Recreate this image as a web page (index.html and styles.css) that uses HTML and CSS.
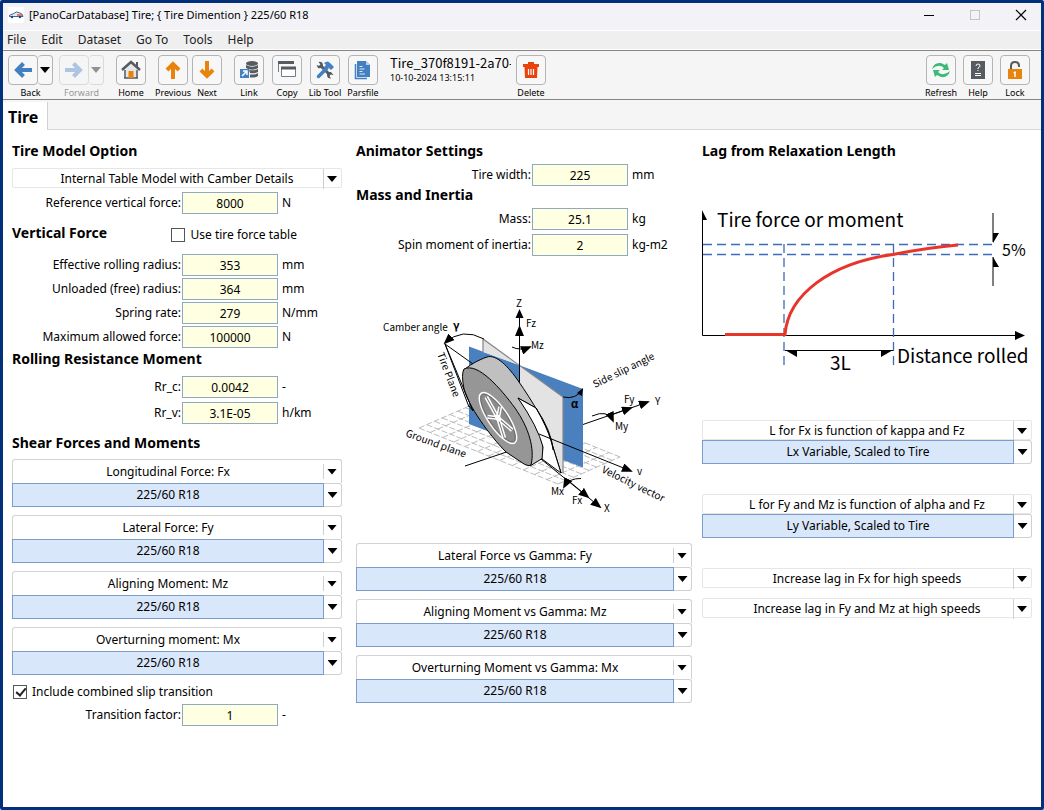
FILE: index.html
```html
<!DOCTYPE html>
<html lang="en">
<head>
<meta charset="utf-8">
<title>[PanoCarDatabase] Tire</title>
<link rel="stylesheet" href="styles.css">
</head>
<body>
<div class="window">
  <header class="titlebar">
    <svg class="app-icon" viewBox="0 0 16 16" aria-hidden="true"><rect width="16" height="16" fill="#fff"/><path d="M1 9Q3 7 5 7Q8 3.500 12 6Q15 7 15 9.500H2Z" fill="#e3ebf6" stroke="#285694" stroke-width=".9"/><path d="M9 8H14" stroke="#e25a43" stroke-width="1.500"/><circle cx="4" cy="10" r="1.200" fill="#346"/><circle cx="12" cy="10" r="1.200" fill="#346"/></svg>
    <span class="title">[PanoCarDatabase] Tire; { Tire Dimention } 225/60 R18</span>
    <div class="window-buttons">
      <button type="button" aria-label="Minimize"><svg viewBox="0 0 12 12"><path d="M1 6.500H11" stroke="#000"/></svg></button>
      <button type="button" aria-label="Maximize" disabled><svg viewBox="0 0 12 12"><rect x="1.500" y="1.500" width="9" height="9" fill="none" stroke="#c4c4c6"/></svg></button>
      <button type="button" aria-label="Close"><svg viewBox="0 0 12 12"><path d="M1 1L11 11M11 1L1 11" stroke="#000" stroke-width="1.200"/></svg></button>
    </div>
  </header>
  <nav class="menubar">
    <button type="button">File</button><button type="button">Edit</button><button type="button">Dataset</button><button type="button">Go To</button><button type="button">Tools</button><button type="button">Help</button>
  </nav>
  <div class="toolbar">
    <div class="tools near">
      <div class="split">
        <div class="split-row">
          <button type="button" class="box" aria-labelledby="back"><svg viewBox="0 0 20 20"><path d="M19 10H4M10.500 3.500L4 10L10.500 16.500" fill="none" stroke="#4380c2" stroke-width="4"/></svg></button><button type="button" class="box drop" aria-label="Back history"><i class="arrow"></i></button>
        </div>
        <span id="back" class="caption">Back</span>
      </div>
      <div class="split off">
        <div class="split-row">
          <button type="button" class="box" aria-labelledby="forward" disabled><svg viewBox="0 0 20 20"><path d="M1 10H16M9.500 3.500L16 10L9.500 16.500" fill="none" stroke="#4380c2" stroke-width="4"/></svg></button><button type="button" class="box drop" aria-label="Forward history" disabled><i class="arrow"></i></button>
        </div>
        <span id="forward" class="caption">Forward</span>
      </div>
    </div>
    <button type="button" class="tool"><span class="box"><svg viewBox="0 0 20 20"><path d="M4 10L10 4L16 10V18H4Z" fill="#e6e6e6"/><path d="M4 10V18M16 10V18M3 18H17" stroke="#555b60" stroke-width="1.500"/><path d="M1 10L10 2L19 10" fill="none" stroke="#555b60" stroke-width="2.500"/><path d="M15 2H17V8L15 6Z" fill="#555b60"/><path d="M7.500 11H12.500V18H7.500Z" fill="#e8830c"/></svg></span><span class="caption">Home</span></button>
    <div class="tools tight">
      <button type="button" class="tool"><span class="box"><svg viewBox="0 0 20 20"><path d="M10 19V4M4 10L10 4L16 10" fill="none" stroke="#e8830c" stroke-width="4"/></svg></span><span class="caption">Previous</span></button>
      <button type="button" class="tool"><span class="box"><svg viewBox="0 0 20 20"><path d="M10 1V16M4 10L10 16L16 10" fill="none" stroke="#e8830c" stroke-width="4"/></svg></span><span class="caption">Next</span></button>
    </div>
    <div class="tools">
      <button type="button" class="tool"><span class="box"><svg viewBox="0 0 20 20"><g fill="#555b60"><ellipse cx="13" cy="3.500" rx="6" ry="2.500"/><path d="M7 5Q13 8.500 19 5V8Q13 11.500 7 8ZM10 10Q15 11 19 9V12Q15 14 11 13ZM11 14.500Q16 15 19 13V16Q16 18 11 17.500Z"/></g><path d="M1 9H10V18H1Z" fill="#4380c2"/><path d="M3 16L8 11M4 11H8V15" fill="none" stroke="#fff" stroke-width="1.500"/></svg></span><span class="caption">Link</span></button>
      <button type="button" class="tool"><span class="box"><svg viewBox="0 0 20 20"><path d="M1.500 12V2H17" fill="none" stroke="#777c80"/><path d="M1 2.500H17" stroke="#555b60" stroke-width="3"/><path d="M4.500 7.500H18.500V16.500H4.500Z" fill="#fff" stroke="#777c80"/><path d="M4 8H19" stroke="#555b60" stroke-width="3"/></svg></span><span class="caption">Copy</span></button>
      <button type="button" class="tool"><span class="box"><svg viewBox="0 0 20 20"><path d="M5 5L15 15" stroke="#555b60" stroke-width="3"/><path d="M3.500 2Q8 1 8 6Q7 9 3 8L1.500 5L4.500 6L5.500 4.500ZM12 15Q12 11.500 16 12L18.500 15L15.500 14.500L14.500 16L16 18.500Q12 18.500 12 15Z" fill="#555b60"/><path d="M3.500 16.500L12 8" stroke="#4380c2" stroke-width="3.500" stroke-linecap="round"/><path d="M9 3Q13 0 15 3L19 7L16 10L13 7L11 9L9 7L11 5Z" fill="#4380c2"/></svg></span><span class="caption">Lib Tool</span></button>
      <button type="button" class="tool"><span class="box"><svg viewBox="0 0 20 20"><path d="M2.500 4V18.500H14" fill="none" stroke="#4380c2" stroke-width="1.500"/><path d="M4 1H13L17 5V17H4Z" fill="#4380c2"/><path d="M13 1V5H17" fill="#b9d0ec"/><path d="M6.500 6.500H9.500M6.500 9H11.500M6.500 11.500H9.500M6.500 14H12" stroke="#dce8f6"/></svg></span><span class="caption">Parsfile</span></button>
    </div>
    <div class="record"><span class="record-id">Tire_370f8191-2a70-4</span><span class="record-date">10-10-2024 13:15:11</span></div>
    <button type="button" class="tool delete"><span class="box"><svg viewBox="0 0 20 20"><path d="M7 4V2H13V4H18V7H16.500L16 18H4L3.500 7H2V4Z" fill="#e8430c"/><path d="M7.500 9V15M10 9V15M12.500 9V15" stroke="#fff" stroke-width="1.200"/></svg></span><span class="caption">Delete</span></button>
    <div class="tools end">
      <button type="button" class="tool"><span class="box"><svg viewBox="0 0 20 20"><path d="M1 9Q3 2 10 3L14 5L16 3L18 10H11L13 8Q8 3 1 9ZM19 11Q17 18 10 17L6 15L4 17L2 10H9L7 12Q12 17 19 11Z" fill="#3dba78"/></svg></span><span class="caption">Refresh</span></button>
      <button type="button" class="tool"><span class="box"><svg viewBox="0 0 20 20"><path d="M3 1H17V19H3Z" fill="#555b60"/><path d="M8 6Q8 4 10 4T12 6Q12 7 10 8V9M10 10V11" fill="none" stroke="#fff"/><path d="M7 13.500H13M7 15.500H13" stroke="#fff"/></svg></span><span class="caption">Help</span></button>
      <button type="button" class="tool"><span class="box"><svg viewBox="0 0 20 20"><path d="M6 9V6Q6 2 10 2T14 6V7" fill="none" stroke="#555b60" stroke-width="2"/><path d="M3 9H17V19H3Z" fill="#e8830c"/><path d="M10 11.500V17M8.500 12.500H11" stroke="#fff" stroke-width="1.500"/></svg></span><span class="caption">Lock</span></button>
    </div>
  </div>
  <div class="tabs"><h1 class="tab">Tire</h1></div>

  <main class="columns">
    <section class="column first">
      <h2>Tire Model Option</h2>
      <div class="combo plain low"><select aria-label="Tire model"><option>Internal Table Model with Camber Details</option></select><i class="arrow"></i></div>
      <div class="fields under-combo">
        <div class="field"><label for="fref">Reference vertical force:</label><input id="fref" value="8000"><span>N</span></div>
      </div>
      <div class="heading-row">
        <h2>Vertical Force</h2>
        <label class="check"><input type="checkbox">Use tire force table</label>
      </div>
      <div class="fields">
        <div class="field"><label for="err">Effective rolling radius:</label><input id="err" value="353"><span>mm</span></div>
        <div class="field"><label for="ufr">Unloaded (free) radius:</label><input id="ufr" value="364"><span>mm</span></div>
        <div class="field"><label for="spr">Spring rate:</label><input id="spr" value="279"><span>N/mm</span></div>
        <div class="field"><label for="maf">Maximum allowed force:</label><input id="maf" value="100000"><span>N</span></div>
      </div>
      <h2 class="close-heading">Rolling Resistance Moment</h2>
      <div class="fields loose resist">
        <div class="field"><label for="rrc">Rr_c:</label><input id="rrc" value="0.0042"><span>-</span></div>
        <div class="field"><label for="rrv">Rr_v:</label><input id="rrv" value="3.1E-05"><span>h/km</span></div>
      </div>
      <h2 class="far-heading">Shear Forces and Moments</h2>
      <div class="links">
        <div class="pair">
          <div class="combo"><select aria-label="Longitudinal force"><option>Longitudinal Force: Fx</option></select><i class="arrow"></i></div>
          <div class="link"><button type="button" class="target">225/60 R18</button><button type="button" class="pick" aria-label="Choose dataset"><i class="arrow"></i></button></div>
        </div>
        <div class="pair">
          <div class="combo"><select aria-label="Lateral force"><option>Lateral Force: Fy</option></select><i class="arrow"></i></div>
          <div class="link"><button type="button" class="target">225/60 R18</button><button type="button" class="pick" aria-label="Choose dataset"><i class="arrow"></i></button></div>
        </div>
        <div class="pair">
          <div class="combo"><select aria-label="Aligning moment"><option>Aligning Moment: Mz</option></select><i class="arrow"></i></div>
          <div class="link"><button type="button" class="target">225/60 R18</button><button type="button" class="pick" aria-label="Choose dataset"><i class="arrow"></i></button></div>
        </div>
        <div class="pair">
          <div class="combo"><select aria-label="Overturning moment"><option>Overturning moment: Mx</option></select><i class="arrow"></i></div>
          <div class="link"><button type="button" class="target">225/60 R18</button><button type="button" class="pick" aria-label="Choose dataset"><i class="arrow"></i></button></div>
        </div>
      </div>
      <label class="check slip"><input type="checkbox" checked>Include combined slip transition</label>
      <div class="fields">
        <div class="field"><label for="trf">Transition factor:</label><input id="trf" value="1"><span>-</span></div>
      </div>
    </section>

    <section class="column second">
      <h2>Animator Settings</h2>
      <div class="fields under-combo">
        <div class="field"><label for="twd">Tire width:</label><input id="twd" value="225"><span>mm</span></div>
      </div>
      <h2>Mass and Inertia</h2>
      <div class="fields loose under-combo">
        <div class="field"><label for="mas">Mass:</label><input id="mas" value="25.1"><span>kg</span></div>
        <div class="field"><label for="smi">Spin moment of inertia:</label><input id="smi" value="2"><span>kg-m2</span></div>
      </div>
      <svg class="tire-figure" viewBox="356 290 336 230" role="img" aria-label="Tire axis system">
        <defs><marker id="tip" viewBox="0 0 11 9" refX="9" refY="4.500" markerWidth="11" markerHeight="9" markerUnits="userSpaceOnUse" orient="auto"><path d="M0 0L11 4.500L0 9Z"/></marker></defs>
        <g transform="matrix(1.390 .560 .620 -.270 419 428)"><path class="ground" d="M0 0H100M0 12.500H100M0 25H100M0 37.500H100M0 50H100M0 62.500H100M0 75H100M0 87.500H100M0 100H100M0 0V100M8 0V100M17 0V100M25 0V100M33 0V100M42 0V100M50 0V100M58 0V100M67 0V100M75 0V100M83 0V100M92 0V100M100 0V100"/></g>
        <path class="line" d="M465 466L508 451.500"/>
        <path d="M469 346.500L583 389V467.500L469 424Z" fill="#4a80bd"/>
        <path d="M519 365L563 397V473L519 441ZM483 339L519 365L483 352Z" fill="#e3e3e3"/>
        <path d="M483 352V339L563 397V473" fill="none" stroke="#858585" stroke-width="1.200"/>
        <path class="line" d="M519.500 384V313"/>
        <path d="M464 370C468 366 478 360 487 357C496 354 508 366 519 382C530 398 549 427 553 447L561 473L536 408L518 398C529 411 542 433 543 447V458L530 466Z" fill="#c0c0c0" class="line"/>
        <path d="M518 398L536 408Q547 427 551 441L561 473L542 459L543 447Q538 427 518 398Z" fill="#fff" class="line"/>
        <path class="line" d="M536 408Q552 432 553 450"/>
        <path d="M464 369C478 362 501 389 515 408C529 428 535 449 531 465Q528 467 521 462L506 452C489 435 468 405 464 389Q461 374 464 369Z" fill="#969696" class="line"/>
        <g transform="translate(498 418) rotate(56)">
          <ellipse rx="30" ry="10" fill="#8b8b8b" stroke="#fff" stroke-width="1.400"/>
          <ellipse rx="28" ry="8.500" fill="none" stroke="#666" stroke-width=".7"/>
          <g stroke="#fff" stroke-width="4"><path d="M0 0L-24 -2M0 0L-7 8M0 0L20 6M0 0L18 -5M0 0L-8 -8"/></g>
          <g stroke="#777" stroke-width="1"><path d="M0 0L-24 -2M0 0L-7 8M0 0L20 6M0 0L18 -5M0 0L-8 -8"/></g>
          <ellipse rx="4" ry="2.500" fill="#fff"/>
        </g>
        <path class="line" d="M473 364L445 344L473 411L469 406M445 344L469 407"/>
        <path class="line" d="M484 339Q462 327 445 343" marker-end="url(#tip)"/>
        <path d="M519.500 309L515.500 318H523.500ZM519.500 325L515 336H524Z"/>
        <path class="line" d="M512 347Q520 351 530 347" marker-end="url(#tip)"/>
        <path class="line" d="M563 397Q576 400 583 389"/><path d="M583 388L577 393L582 396Z"/>
        <path class="line" d="M583 424.500L648 402" marker-end="url(#tip)"/><path class="line" d="M611 415L631 408" marker-end="url(#tip)"/>
        <path class="line" d="M592 416Q608 409 613 421" marker-end="url(#tip)"/>
        <path class="line" d="M539 434L631 471" marker-end="url(#tip)"/>
        <path class="line" d="M541 459L600 507" marker-end="url(#tip)"/><path class="line" d="M570 482L588 497" marker-end="url(#tip)"/>
        <path class="line" d="M581 478.500Q569 478 564 487" marker-end="url(#tip)"/>
        <text x="383" y="331">Camber angle</text><text x="453" y="330" class="greek">γ</text>
        <text x="516" y="307">Z</text><text x="526" y="327">Fz</text><text x="531" y="349">Mz</text>
        <text x="571" y="408" class="greek">α</text><text x="624" y="403">Fy</text><text x="655" y="405">Y</text><text x="615" y="430">My</text>
        <text x="637" y="475">v</text><text x="551" y="495">Mx</text><text x="572" y="504">Fx</text><text x="604" y="512">X</text>
        <text transform="translate(595 388) rotate(-26)">Side slip angle</text>
        <text transform="translate(437 354) rotate(69)">Tire Plane</text>
        <text transform="translate(405 436) rotate(20)">Ground plane</text>
        <text transform="translate(601 472) rotate(26)">Velocity vector</text>
      </svg>
      <div class="links">
        <div class="pair">
          <div class="combo"><select aria-label="Lateral force vs gamma"><option>Lateral Force vs Gamma: Fy</option></select><i class="arrow"></i></div>
          <div class="link"><button type="button" class="target">225/60 R18</button><button type="button" class="pick" aria-label="Choose dataset"><i class="arrow"></i></button></div>
        </div>
        <div class="pair">
          <div class="combo"><select aria-label="Aligning moment vs gamma"><option>Aligning Moment vs Gamma: Mz</option></select><i class="arrow"></i></div>
          <div class="link"><button type="button" class="target">225/60 R18</button><button type="button" class="pick" aria-label="Choose dataset"><i class="arrow"></i></button></div>
        </div>
        <div class="pair">
          <div class="combo"><select aria-label="Overturning moment vs gamma"><option>Overturning Moment vs Gamma: Mx</option></select><i class="arrow"></i></div>
          <div class="link"><button type="button" class="target">225/60 R18</button><button type="button" class="pick" aria-label="Choose dataset"><i class="arrow"></i></button></div>
        </div>
      </div>
    </section>

    <section class="column third">
      <h2>Lag from Relaxation Length</h2>
      <svg class="lag-figure" viewBox="702 200 330 180" role="img" aria-label="Tire force or moment against distance rolled">
        <path class="line" d="M702.500 212V335.500H1018"/>
        <path d="M702 210L707 220H702ZM1025 335.500L1015 331V340Z"/>
        <g fill="none" stroke="#3c6cb8" stroke-width="1.300" stroke-dasharray="9 5"><path d="M703 244.500H997M703 254.500H997M784 244V370M893.500 244V370"/></g>
        <path d="M725 334.500H785C788 295 830 263 893 254.500Q925 248 958 245" fill="none" stroke="#e8352b" stroke-width="3"/>
        <path class="line" d="M993 213V242M993 286V257"/><path d="M993 243L999 233H993ZM993 257L999 267H993Z"/>
        <path class="line" d="M785 350.500H893"/><path d="M785 350L797 357V350ZM893 350L881 357V350Z"/>
        <g class="lag-text"><text x="717" y="227">Tire force or moment</text><text x="897" y="363">Distance rolled</text><text x="830" y="370">3L</text></g>
        <text class="percent" x="1002" y="256">5%</text>
      </svg>
      <div class="lags">
        <div class="pair">
          <div class="combo plain"><select aria-label="L for Fx"><option>L for Fx is function of kappa and Fz</option></select><i class="arrow"></i></div>
          <div class="link"><button type="button" class="target">Lx Variable, Scaled to Tire</button><button type="button" class="pick" aria-label="Choose dataset"><i class="arrow"></i></button></div>
        </div>
        <div class="pair">
          <div class="combo plain"><select aria-label="L for Fy and Mz"><option>L for Fy and Mz is function of alpha and Fz</option></select><i class="arrow"></i></div>
          <div class="link"><button type="button" class="target">Ly Variable, Scaled to Tire</button><button type="button" class="pick" aria-label="Choose dataset"><i class="arrow"></i></button></div>
        </div>
        <div class="speeds">
          <div class="combo plain"><select aria-label="Fx lag at high speeds"><option>Increase lag in Fx for high speeds</option></select><i class="arrow"></i></div>
          <div class="combo plain"><select aria-label="Fy and Mz lag at high speeds"><option>Increase lag in Fy and Mz at high speeds</option></select><i class="arrow"></i></div>
        </div>
      </div>
    </section>
  </main>
</div>
</body>
</html>
```
FILE: styles.css
```css
* { box-sizing: border-box; }
body { margin: 0; background: #fff; color: #000; font: 12px/20px "Noto Sans", "Open Sans", sans-serif; }
button, input, select { font: inherit; color: inherit; margin: 0; padding: 0; }
button { background: none; border: 0; }
svg { display: block; }
h1, h2 { margin: 0; font-weight: 700; }

.window { min-height: 100vh; border: 3px solid #03307b; border-radius: 2px; background: #fff; }
.titlebar { display: flex; align-items: center; height: 28px; padding: 0 14px 4px 5px; background: #f3f3f7; border-bottom: 1px solid #fff; font-size: 11px; }
.app-icon { width: 16px; height: 16px; margin-right: 5px; }
.window-buttons { display: flex; gap: 34px; margin-left: auto; }
.window-buttons svg { width: 12px; height: 12px; }
.menubar { display: flex; gap: 15px; height: 19px; padding-left: 4px; background: #efefef; border-bottom: 1px solid #fff; line-height: 18px; }
.menubar button { color: #222; }

.toolbar { display: flex; align-items: flex-start; gap: 12px; height: 50px; padding: 4px 11px 0 5px; background: #f5f5f5; border: solid #858585; border-width: 1px 0; }
.tools { display: flex; gap: 8px; }
.tools.tight { gap: 4px; }
.tools.near { gap: 6px; }
.tools.end { gap: 7px; margin-left: auto; }
.tool, .split { display: flex; flex-direction: column; align-items: center; flex: none; }
.tool { width: 30px; }
.split-row { display: flex; }
.box { display: flex; align-items: center; justify-content: center; width: 30px; height: 30px; border: 1px solid #b4b4b4; border-radius: 4px; background: #f7f7f7; }
.box svg { width: 20px; height: 20px; }
.box.drop { width: 15px; border-left: 0; }
.off { opacity: .4; }
.caption { font-size: 9px; line-height: 15px; white-space: nowrap; }
.record { display: flex; flex-direction: column; width: 121px; overflow: hidden; white-space: nowrap; line-height: 15px; }
.record-id { font-family: "Noto Sans CJK SC", "Noto Sans", sans-serif; font-size: 13px; }
.record-date { font-size: 9px; }
.delete { margin-left: -7px; }

.arrow { width: 10px; height: 6px; background: #000; clip-path: polygon(0 0, 100% 0, 50% 100%); }

.tabs { display: flex; height: 30px; padding-top: 2px; background: #f5f5f5; border-bottom: 1px solid #d6d6d6; }
.tab { height: 28px; padding: 0 9px 0 5px; background: #fff; border-right: 1px solid #d0d0d0; font-size: 16px; line-height: 30px; }

.columns { display: grid; grid-template-columns: 334fr 336fr 330fr; column-gap: 10px; padding: 12px 9px; }
.column { min-width: 0; }
.first { padding-right: 4px; }
h2 { font-size: 14px; line-height: 18px; white-space: nowrap; }
.close-heading { margin-top: 2px; }
.far-heading { margin-top: 10px; margin-bottom: 7px; }
.heading-row { display: flex; justify-content: space-between; padding: 10px 45px 10px 0; }
.heading-row .check { margin-top: 2px; }

.fields { display: grid; gap: 2px; }
.fields.loose { gap: 4px; }
.under-combo { margin-top: 4px; }
.resist { margin-top: 8px; }
.field { display: grid; grid-template-columns: 169px 96px 1fr; align-items: center; column-gap: 1px; white-space: nowrap; }
.second .field { grid-template-columns: 175px 96px 1fr; }
.field label { text-align: right; }
.field input { width: 100%; height: 22px; border: 1px solid #8fa9c4; background: #ffffe1; text-align: center; }
.field span { padding-left: 3px; }

.check { display: flex; align-items: center; gap: 5px; height: 18px; white-space: nowrap; }
.check input { appearance: none; width: 14px; height: 14px; border: 1px solid #555; background: #fff; }
.check input:checked::before { content: ""; display: block; width: 4px; height: 8px; margin: 0 4px; border: solid #222; border-width: 0 2px 2px 0; transform: rotate(40deg); }
.slip { margin: 8px 0 3px; padding-left: 1px; }

.links { display: grid; gap: 8px; }
.combo { display: grid; grid-template-columns: 1fr 18px; height: 24px; border: 1px solid #d2d2d2; border-bottom: 0; border-radius: 3px 3px 0 0; align-items: center; }
.combo select { grid-area: 1 / 1 / 2 / 3; width: 100%; height: 100%; appearance: none; border: 0; background: linear-gradient(#cfcfcf, #cfcfcf) right 17px center / 1px 15px no-repeat; text-align: center; text-align-last: center; padding-right: 18px; }
.combo .arrow { grid-area: 1 / 2 / 2 / 3; justify-self: center; pointer-events: none; }
.combo.plain { height: 20px; border: 1px solid #e6e6e6; border-radius: 2px; }
.plain select { background-size: 1px 100%; padding-right: 0; }
.low { margin-top: 8px; }
.link { display: grid; grid-template-columns: 1fr 18px; height: 24px; }
.target { border: 1px solid #7c9dcc; background: #d9e7fb; }
.pick { display: grid; place-items: center; border: 1px solid #d0d0d0; border-left: 0; border-radius: 0 3px 3px 0; }

.tire-figure { width: 100%; margin: 34px 0 23px; }
.tire-figure text { font: 10px "Noto Sans CJK SC", "Noto Sans", sans-serif; }
.tire-figure .greek { font-weight: 700; font-size: 11px; }
.line { stroke: #000; stroke-width: 1; }
.line:not([fill]) { fill: none; }
.ground { fill: none; stroke: #bbb; stroke-width: 1; stroke-dasharray: 6 2; vector-effect: non-scaling-stroke; }
.lag-figure { width: 100%; margin: 40px 0; }
.lag-text text { font: 19px "Noto Sans CJK SC", "Noto Sans", sans-serif; }
.percent { font: 16px "Noto Sans CJK SC", "Noto Sans", sans-serif; }
.lags { display: grid; gap: 30px; }
.speeds { display: grid; gap: 10px; }
```
